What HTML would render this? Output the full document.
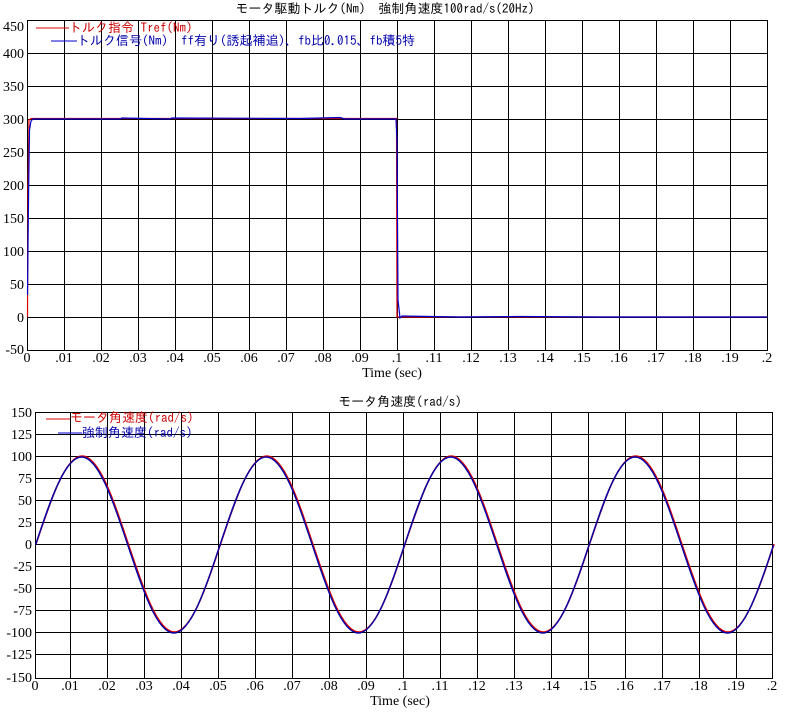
<!DOCTYPE html>
<html><head><meta charset="utf-8"><style>
html,body{margin:0;padding:0;background:#fff;width:795px;height:724px;overflow:hidden}
svg{display:block}
text{font-family:"IPAGothic","Noto Sans CJK JP",sans-serif;font-size:13px;fill:#000}
.n{font-family:"Liberation Serif","IPAGothic",serif;font-size:14px}
</style></head><body>
<svg width="795" height="724" viewBox="0 0 795 724" xmlns="http://www.w3.org/2000/svg">
<g stroke="#000" stroke-width="1" fill="none" shape-rendering="crispEdges">
<!-- top grid -->
<rect x="27.5" y="20.5" width="740" height="330"/>
<path d="M27 53.5H767M27 86.5H767M27 119.5H767M27 152.5H767M27 185.5H767M27 218.5H767M27 251.5H767M27 284.5H767M27 317.5H767"/>
<path d="M64.5 20V350M101.5 20V350M138.5 20V350M175.5 20V350M212.5 20V350M249.5 20V350M286.5 20V350M323.5 20V350M360.5 20V350M397.5 20V350M434.5 20V350M471.5 20V350M508.5 20V350M545.5 20V350M582.5 20V350M619.5 20V350M656.5 20V350M693.5 20V350M730.5 20V350"/>
<!-- bottom grid -->
<rect x="35.5" y="412.5" width="737" height="266"/>
<path d="M35 434.5H772M35 456.5H772M35 478.5H772M35 500.5H772M35 522.5H772M35 544.5H772M35 566.5H772M35 588.5H772M35 610.5H772M35 632.5H772M35 654.5H772"/>
<path d="M70.5 412V678M107.5 412V678M144.5 412V678M181.5 412V678M218.5 412V678M255.5 412V678M292.5 412V678M329.5 412V678M366.5 412V678M403.5 412V678M440.5 412V678M477.5 412V678M514.5 412V678M551.5 412V678M588.5 412V678M625.5 412V678M662.5 412V678M699.5 412V678M736.5 412V678"/>
</g>
<!-- top curves -->
<path d="M27.5 317 L28 190 L29 120 L31 118.5 L396.5 118.5 L397 317 L767 317" stroke="#d00" stroke-width="1.2" fill="none"/>
<path d="M27.5 295 L28.5 200 L29.5 130 L31 121 L33 119 L120 119 L122 118 L170 119 L172 118 L300 118.5 L340 117.5 L345 119 L396 119 L397 140 L398 300 L400 318 L402 316 L460 317 L520 316.5 L600 317 L680 317 L767 317" stroke="#00c" stroke-width="1.2" fill="none"/>
<path d="M36 28H69" stroke="#d00"/><path d="M51 41H77" stroke="#00c"/>
<!-- bottom curves -->
<path d="M35.5 545 c15.04,-45.08 29.43,-88 46.13,-88 c16.69,0 31.08,42.92 46.13,88 c15.04,45.08 29.43,88 46.13,88 c16.69,0 31.08,-42.92 46.13,-88 c15.04,-45.08 29.43,-88 46.13,-88 c16.69,0 31.08,42.92 46.13,88 c15.04,45.08 29.43,88 46.13,88 c16.69,0 31.08,-42.92 46.13,-88 c15.04,-45.08 29.43,-88 46.13,-88 c16.69,0 31.08,42.92 46.13,88 c15.04,45.08 29.43,88 46.13,88 c16.69,0 31.08,-42.92 46.13,-88 c15.04,-45.08 29.43,-88 46.13,-88 c16.69,0 31.08,42.92 46.13,88 c15.04,45.08 29.43,88 46.13,88 c16.69,0 31.08,-42.92 46.13,-88" stroke="#d00" stroke-width="1.6" fill="none" transform="translate(0.5,-1)"/>
<path d="M35.5 545 c15.04,-45.08 29.43,-88 46.13,-88 c16.69,0 31.08,42.92 46.13,88 c15.04,45.08 29.43,88 46.13,88 c16.69,0 31.08,-42.92 46.13,-88 c15.04,-45.08 29.43,-88 46.13,-88 c16.69,0 31.08,42.92 46.13,88 c15.04,45.08 29.43,88 46.13,88 c16.69,0 31.08,-42.92 46.13,-88 c15.04,-45.08 29.43,-88 46.13,-88 c16.69,0 31.08,42.92 46.13,88 c15.04,45.08 29.43,88 46.13,88 c16.69,0 31.08,-42.92 46.13,-88 c15.04,-45.08 29.43,-88 46.13,-88 c16.69,0 31.08,42.92 46.13,88 c15.04,45.08 29.43,88 46.13,88 c16.69,0 31.08,-42.92 46.13,-88" stroke="#00a" stroke-width="1.4" fill="none"/>
<path d="M46 419H70" stroke="#d00"/><path d="M58 433H82" stroke="#00c"/>
<!-- texts -->
<text x="385" y="13" text-anchor="middle">モータ駆動トルク(Nm)　強制角速度100rad/s(20Hz)</text>
<text x="69" y="32" style="fill:#c00">トルク指令 Tref(Nm)</text>
<text x="77" y="45" style="fill:#00a">トルク信号(Nm)　ff有り(誘起補追)、fb比0.015、fb積5特</text>
<text x="400" y="406" text-anchor="middle">モータ角速度(rad/s)</text>
<text x="70" y="422" style="fill:#c00">モータ角速度(rad/s)</text>
<text x="82" y="437" style="fill:#00a">強制角速度(rad/s)</text>
<g class="n" text-anchor="end">
<text class="n" x="24" y="31">450</text><text class="n" x="24" y="58">400</text><text class="n" x="24" y="91">350</text><text class="n" x="24" y="124">300</text><text class="n" x="24" y="157">250</text><text class="n" x="24" y="190">200</text><text class="n" x="24" y="223">150</text><text class="n" x="24" y="256">100</text><text class="n" x="24" y="289">50</text><text class="n" x="24" y="322">0</text><text class="n" x="24" y="354">-50</text>
<text class="n" x="32" y="417">150</text><text class="n" x="32" y="439">125</text><text class="n" x="32" y="461">100</text><text class="n" x="32" y="483">75</text><text class="n" x="32" y="505">50</text><text class="n" x="32" y="527">25</text><text class="n" x="32" y="549">0</text><text class="n" x="32" y="571">-25</text><text class="n" x="32" y="593">-50</text><text class="n" x="32" y="615">-75</text><text class="n" x="32" y="637">-100</text><text class="n" x="32" y="659">-125</text><text class="n" x="32" y="682">-150</text>
</g>
<g text-anchor="middle">
<text class="n" x="27" y="362">0</text><text class="n" x="64" y="362">.01</text><text class="n" x="101" y="362">.02</text><text class="n" x="138" y="362">.03</text><text class="n" x="175" y="362">.04</text><text class="n" x="212" y="362">.05</text><text class="n" x="249" y="362">.06</text><text class="n" x="286" y="362">.07</text><text class="n" x="323" y="362">.08</text><text class="n" x="360" y="362">.09</text><text class="n" x="397" y="362">.1</text><text class="n" x="434" y="362">.11</text><text class="n" x="471" y="362">.12</text><text class="n" x="508" y="362">.13</text><text class="n" x="545" y="362">.14</text><text class="n" x="582" y="362">.15</text><text class="n" x="619" y="362">.16</text><text class="n" x="656" y="362">.17</text><text class="n" x="693" y="362">.18</text><text class="n" x="730" y="362">.19</text><text class="n" x="767" y="362">.2</text>
<text class="n" x="392" y="377">Time (sec)</text>
<text class="n" x="35" y="690">0</text><text class="n" x="70" y="690">.01</text><text class="n" x="107" y="690">.02</text><text class="n" x="144" y="690">.03</text><text class="n" x="181" y="690">.04</text><text class="n" x="218" y="690">.05</text><text class="n" x="255" y="690">.06</text><text class="n" x="292" y="690">.07</text><text class="n" x="329" y="690">.08</text><text class="n" x="366" y="690">.09</text><text class="n" x="403" y="690">.1</text><text class="n" x="440" y="690">.11</text><text class="n" x="477" y="690">.12</text><text class="n" x="514" y="690">.13</text><text class="n" x="551" y="690">.14</text><text class="n" x="588" y="690">.15</text><text class="n" x="625" y="690">.16</text><text class="n" x="662" y="690">.17</text><text class="n" x="699" y="690">.18</text><text class="n" x="736" y="690">.19</text><text class="n" x="772" y="690">.2</text>
<text class="n" x="400" y="705">Time (sec)</text>
</g>
</svg>
</body></html>
